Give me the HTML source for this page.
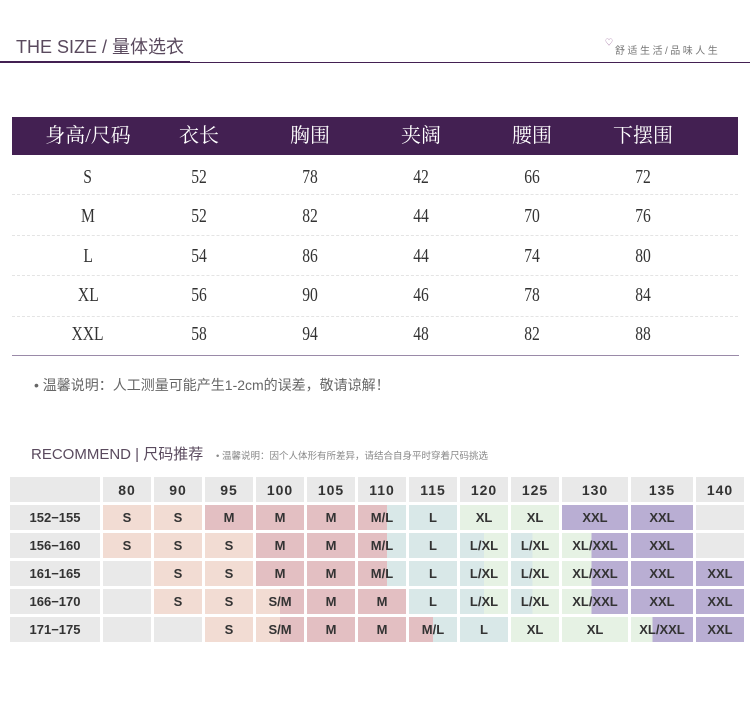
<!DOCTYPE html>
<html><head><meta charset="utf-8"><style>
body{margin:0;width:750px;height:701px;background:#fff;position:relative;overflow:hidden;font-family:"Liberation Sans","Noto Sans CJK SC",sans-serif}
.a{position:absolute}
.h{position:absolute;top:117px;height:38px;line-height:38px;width:120px;margin-left:-60px;text-align:center;color:#fff;font-size:20px;font-family:"Liberation Serif","Noto Serif CJK SC",serif}
.c{position:absolute;width:80px;margin-left:-40px;text-align:center;font-family:"Liberation Serif",serif;font-size:20px;color:#333;line-height:24px}
.c span{display:inline-block;transform:scaleX(.78)}
.d{position:absolute;left:12px;width:726px;border-top:1px dashed #e4e4e4}
.t2{border-collapse:separate;border-spacing:3px;position:absolute;left:7px;top:474px}
.t2 td{height:25px;padding:0;text-align:center;font-weight:bold;font-size:13px;color:#333;background:#e9e9e9}
.t2 tr:first-child td{font-size:14px;letter-spacing:1px}
.p{background:#f2dcd3!important}.k{background:#e3bfc2!important}.b{background:#d9e8e8!important}.g{background:#e6f2e4!important}.u{background:#b9aed3!important}
</style></head><body>
<div class="a" style="left:16px;top:33px;font-size:18px;color:#5a4a5e">THE SIZE / 量体选衣</div>
<div class="a" style="left:0;top:62px;width:750px;height:1px;background:#432052"></div>
<div class="a" style="left:0;top:61px;width:190px;height:2px;background:#432052"></div>
<div class="a" style="left:605px;top:37px;font-size:8px;color:#a070a0">♡</div>
<div class="a" style="left:615px;top:42px;font-size:10px;color:#777;letter-spacing:2.5px">舒适生活/品味人生</div>
<div class="a" style="left:12px;top:117px;width:726px;height:38px;background:#432052"></div>
<div class="h" style="left:88px">身高/尺码</div><div class="h" style="left:199px">衣长</div><div class="h" style="left:310px">胸围</div><div class="h" style="left:421px">夹阔</div><div class="h" style="left:532px">腰围</div><div class="h" style="left:643px">下摆围</div>

<div class="c" style="left:88px;top:165px"><span>S</span></div><div class="c" style="left:199px;top:165px"><span>52</span></div><div class="c" style="left:310px;top:165px"><span>78</span></div><div class="c" style="left:421px;top:165px"><span>42</span></div><div class="c" style="left:532px;top:165px"><span>66</span></div><div class="c" style="left:643px;top:165px"><span>72</span></div>
<div class="d" style="top:194px"></div>
<div class="c" style="left:88px;top:204px"><span>M</span></div><div class="c" style="left:199px;top:204px"><span>52</span></div><div class="c" style="left:310px;top:204px"><span>82</span></div><div class="c" style="left:421px;top:204px"><span>44</span></div><div class="c" style="left:532px;top:204px"><span>70</span></div><div class="c" style="left:643px;top:204px"><span>76</span></div>
<div class="d" style="top:235px"></div>
<div class="c" style="left:88px;top:244px"><span>L</span></div><div class="c" style="left:199px;top:244px"><span>54</span></div><div class="c" style="left:310px;top:244px"><span>86</span></div><div class="c" style="left:421px;top:244px"><span>44</span></div><div class="c" style="left:532px;top:244px"><span>74</span></div><div class="c" style="left:643px;top:244px"><span>80</span></div>
<div class="d" style="top:275px"></div>
<div class="c" style="left:88px;top:283px"><span>XL</span></div><div class="c" style="left:199px;top:283px"><span>56</span></div><div class="c" style="left:310px;top:283px"><span>90</span></div><div class="c" style="left:421px;top:283px"><span>46</span></div><div class="c" style="left:532px;top:283px"><span>78</span></div><div class="c" style="left:643px;top:283px"><span>84</span></div>
<div class="d" style="top:316px"></div>
<div class="c" style="left:88px;top:322px"><span>XXL</span></div><div class="c" style="left:199px;top:322px"><span>58</span></div><div class="c" style="left:310px;top:322px"><span>94</span></div><div class="c" style="left:421px;top:322px"><span>48</span></div><div class="c" style="left:532px;top:322px"><span>82</span></div><div class="c" style="left:643px;top:322px"><span>88</span></div>
<div class="a" style="left:12px;top:355px;width:727px;height:1px;background:#9a8aa8"></div>
<div class="a" style="left:34px;top:375px;font-size:14px;color:#666">• 温馨说明：人工测量可能产生1-2cm的误差，敬请谅解！</div>
<div class="a" style="left:31px;top:443px;font-size:15px;color:#5a4a5e">RECOMMEND | 尺码推荐</div>
<div class="a" style="left:216px;top:448px;font-size:9.5px;color:#888">• 温馨说明：因个人体形有所差异，请结合自身平时穿着尺码挑选</div>
<table class="t2">
<tr><td style="width:90px"></td><td style="width:48px">80</td><td style="width:48px">90</td><td style="width:48px">95</td><td style="width:48px">100</td><td style="width:48px">105</td><td style="width:48px">110</td><td style="width:48px">115</td><td style="width:48px">120</td><td style="width:48px">125</td><td style="width:66px">130</td><td style="width:62px">135</td><td style="width:48px">140</td></tr>
<tr><td>152−155</td><td class="p">S</td><td class="p">S</td><td class="k">M</td><td class="k">M</td><td class="k">M</td><td style="background:linear-gradient(90deg,#e3bfc2 60%,#d9e8e8 60%)">M/L</td><td class="b">L</td><td class="g">XL</td><td class="g">XL</td><td class="u">XXL</td><td class="u">XXL</td><td></td></tr>
<tr><td>156−160</td><td class="p">S</td><td class="p">S</td><td class="p">S</td><td class="k">M</td><td class="k">M</td><td style="background:linear-gradient(90deg,#e3bfc2 60%,#d9e8e8 60%)">M/L</td><td class="b">L</td><td style="background:linear-gradient(90deg,#d9e8e8 50%,#e6f2e4 50%)">L/XL</td><td style="background:linear-gradient(90deg,#d9e8e8 45%,#e6f2e4 45%)">L/XL</td><td style="background:linear-gradient(90deg,#e6f2e4 45%,#b9aed3 45%)">XL/XXL</td><td class="u">XXL</td><td></td></tr>
<tr><td>161−165</td><td></td><td class="p">S</td><td class="p">S</td><td class="k">M</td><td class="k">M</td><td style="background:linear-gradient(90deg,#e3bfc2 60%,#d9e8e8 60%)">M/L</td><td class="b">L</td><td style="background:linear-gradient(90deg,#d9e8e8 50%,#e6f2e4 50%)">L/XL</td><td style="background:linear-gradient(90deg,#d9e8e8 45%,#e6f2e4 45%)">L/XL</td><td style="background:linear-gradient(90deg,#e6f2e4 45%,#b9aed3 45%)">XL/XXL</td><td class="u">XXL</td><td class="u">XXL</td></tr>
<tr><td>166−170</td><td></td><td class="p">S</td><td class="p">S</td><td style="background:linear-gradient(90deg,#f2dcd3 50%,#e3bfc2 50%)">S/M</td><td class="k">M</td><td class="k">M</td><td class="b">L</td><td style="background:linear-gradient(90deg,#d9e8e8 50%,#e6f2e4 50%)">L/XL</td><td style="background:linear-gradient(90deg,#d9e8e8 45%,#e6f2e4 45%)">L/XL</td><td style="background:linear-gradient(90deg,#e6f2e4 45%,#b9aed3 45%)">XL/XXL</td><td class="u">XXL</td><td class="u">XXL</td></tr>
<tr><td>171−175</td><td></td><td></td><td class="p">S</td><td style="background:linear-gradient(90deg,#f2dcd3 50%,#e3bfc2 50%)">S/M</td><td class="k">M</td><td class="k">M</td><td style="background:linear-gradient(90deg,#e3bfc2 50%,#d9e8e8 50%)">M/L</td><td class="b">L</td><td class="g">XL</td><td class="g">XL</td><td style="background:linear-gradient(90deg,#e6f2e4 35%,#b9aed3 35%)">XL/XXL</td><td class="u">XXL</td></tr>
</table>
</body></html>
